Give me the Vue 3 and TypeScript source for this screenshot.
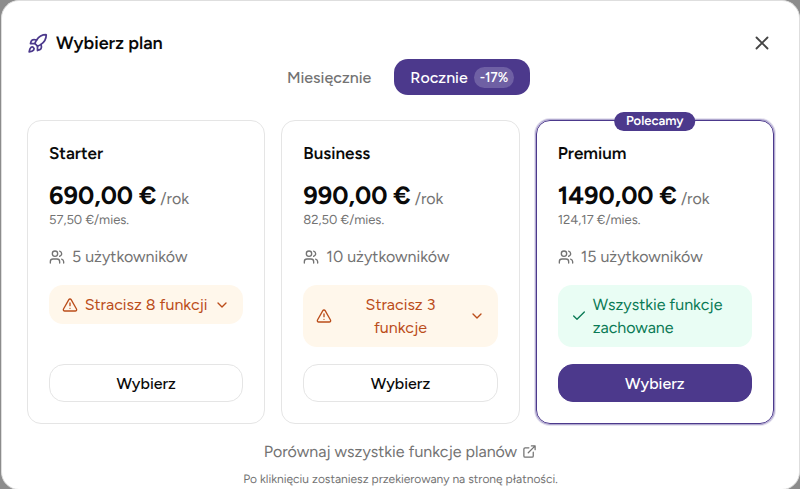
<script setup lang="ts">
import { ref } from 'vue'

interface Plan {
  id: string
  name: string
  price: string
  monthly: string
  users: string
  note: string
  keepsAll: boolean
  recommended: boolean
}

const period = ref<'month' | 'year'>('year')

const plans: Plan[] = [
  { id: 'starter', name: 'Starter', price: '690,00 €', monthly: '57,50 €/mies.', users: '5 użytkowników', note: 'Stracisz 8 funkcji', keepsAll: false, recommended: false },
  { id: 'business', name: 'Business', price: '990,00 €', monthly: '82,50 €/mies.', users: '10 użytkowników', note: 'Stracisz 3 funkcje', keepsAll: false, recommended: false },
  { id: 'premium', name: 'Premium', price: '1490,00 €', monthly: '124,17 €/mies.', users: '15 użytkowników', note: 'Wszystkie funkcje zachowane', keepsAll: true, recommended: true },
]
</script>

<template>
  <div class="backdrop">
    <main class="dialog" role="dialog" aria-labelledby="dialog-title">
      <header class="head">
        <svg class="icon rocket" viewBox="0 0 24 24" aria-hidden="true">
          <path d="M4.5 16.5c-1.5 1.26-2 5-2 5s3.74-.5 5-2c.71-.84.7-2.13-.09-2.91a2.18 2.18 0 0 0-2.91-.09z" />
          <path d="m12 15-3-3a22 22 0 0 1 2-3.95A12.88 12.88 0 0 1 22 2c0 2.72-.78 7.5-6 11a22.35 22.35 0 0 1-4 2z" />
          <path d="M9 12H4s.55-3.03 2-4c1.62-1.08 5 0 5 0" />
          <path d="M12 15v5s3.03-.55 4-2c1.08-1.62 0-5 0-5" />
        </svg>
        <h1 id="dialog-title">Wybierz plan</h1>
        <button class="close" type="button" aria-label="Zamknij">
          <svg class="icon" viewBox="0 0 24 24" aria-hidden="true"><path d="M18 6 6 18M6 6l12 12" /></svg>
        </button>
      </header>

      <div class="periods">
        <button type="button" class="period" :class="{ active: period === 'month' }" :aria-pressed="period === 'month'" @click="period = 'month'">Miesięcznie</button>
        <button type="button" class="period" :class="{ active: period === 'year' }" :aria-pressed="period === 'year'" @click="period = 'year'">
          Rocznie <span class="discount">-17%</span>
        </button>
      </div>

      <section class="plans">
        <article v-for="plan in plans" :key="plan.id" class="card" :class="{ recommended: plan.recommended }">
          <span v-if="plan.recommended" class="badge">Polecamy</span>
          <h2>{{ plan.name }}</h2>
          <p class="price"><strong>{{ plan.price }}</strong><span>/rok</span></p>
          <p class="monthly">{{ plan.monthly }}</p>
          <p class="users">
            <svg class="icon" viewBox="0 0 24 24" aria-hidden="true">
              <path d="M16 21v-2a4 4 0 0 0-4-4H6a4 4 0 0 0-4 4v2" />
              <circle cx="9" cy="7" r="4" />
              <path d="M22 21v-2a4 4 0 0 0-3-3.87M16 3.13a4 4 0 0 1 0 7.75" />
            </svg>
            {{ plan.users }}
          </p>
          <div v-if="plan.keepsAll" class="note kept">
            <svg class="icon" viewBox="0 0 24 24" aria-hidden="true"><path d="M20 6 9 17l-5-5" /></svg>
            <span>{{ plan.note }}</span>
          </div>
          <button v-else type="button" class="note lost">
            <svg class="icon" viewBox="0 0 24 24" aria-hidden="true">
              <path d="m21.73 18-8-14a2 2 0 0 0-3.48 0l-8 14A2 2 0 0 0 4 21h16a2 2 0 0 0 1.73-3M12 9v4M12 17h.01" />
            </svg>
            <span>{{ plan.note }}</span>
            <svg class="icon" viewBox="0 0 24 24" aria-hidden="true"><path d="m6 9 6 6 6-6" /></svg>
          </button>
          <button type="button" class="choose">Wybierz</button>
        </article>
      </section>

      <footer class="foot">
        <a href="#">
          Porównaj wszystkie funkcje planów
          <svg class="icon" viewBox="0 0 24 24" aria-hidden="true">
            <path d="M15 3h6v6M10 14 21 3M18 13v6a2 2 0 0 1-2 2H5a2 2 0 0 1-2-2V8a2 2 0 0 1 2-2h6" />
          </svg>
        </a>
        <p>Po kliknięciu zostaniesz przekierowany na stronę płatności.</p>
      </footer>
    </main>
  </div>
</template>

<style>
body {
  margin: 0;
  background: #8c8c8c;
}
</style>

<style scoped>
.backdrop {
  box-sizing: border-box;
  min-height: 100vh;
  padding: 0 0 0 1px;
  display: grid;
  font-family: Figtree, Lato, "Noto Sans", sans-serif;
  font-size: 16px;
  line-height: 23px;
  text-rendering: geometricPrecision;
  color: #0a0a0a;
}
.dialog {
  box-sizing: border-box;
  padding: 26px 25px 0;
  border: 1px solid #dedede;
  border-radius: 18px;
  background: #fff;
}
h1, h2, p { margin: 0; }
button {
  font: inherit;
  color: inherit;
  border: 0;
  padding: 0;
  background: none;
  cursor: pointer;
}
.icon {
  width: 16px;
  height: 16px;
  flex: none;
  fill: none;
  stroke: currentColor;
  stroke-width: 2;
  stroke-linecap: round;
  stroke-linejoin: round;
}
.head {
  display: flex;
  align-items: center;
  gap: 8px;
  height: 32px;
}
.head .rocket { width: 21px; height: 21px; color: #4c398c; }
h1 { font-size: 18px; font-weight: 600; }
.close {
  display: grid;
  place-items: center;
  margin-left: auto;
  width: 24px;
  height: 24px;
  color: #444;
}
.close .icon { width: 22px; height: 22px; }
.periods {
  display: flex;
  justify-content: center;
  gap: 7px;
}
.period {
  display: flex;
  align-items: center;
  gap: 6px;
  height: 36px;
  padding: 0 16px;
  border-radius: 14px;
  font-weight: 500;
  color: #737373;
}
.period.active { background: #4c398c; color: #fff; }
.discount {
  padding: 0 6px;
  border-radius: 11px;
  background: #6f60a4;
  font-size: 13px;
  font-weight: 600;
  line-height: 21px;
}
.plans {
  display: grid;
  grid-template-columns: repeat(3, 1fr);
  gap: 16px;
  margin-top: 25px;
}
.card {
  position: relative;
  display: flex;
  flex-direction: column;
  padding: 21px;
  border: 1px solid #e5e5e5;
  border-radius: 14px;
}
.card.recommended {
  border-color: #4c398c;
  box-shadow: 0 0 0 1px #b0a8cf, 0 0 0 2px #e6e3f0;
}
.badge {
  position: absolute;
  top: -9px;
  left: 50%;
  transform: translateX(-50%);
  padding: 0 12px;
  border-radius: 10px;
  background: #4c398c;
  color: #fff;
  font-size: 13px;
  font-weight: 600;
  line-height: 19px;
}
h2 { font-size: 17px; font-weight: 600; line-height: 25px; }
.price {
  display: flex;
  align-items: baseline;
  gap: 4px;
  margin-top: 16px;
  line-height: 27px;
  color: #737373;
}
.price strong { font-size: 25px; font-weight: 700; color: #0a0a0a; }
.monthly {
  font-size: 13px;
  line-height: 18px;
  color: #737373;
}
.users {
  display: flex;
  align-items: center;
  gap: 7px;
  margin: 15px 0 17px;
  color: #737373;
}
.note {
  display: flex;
  align-items: center;
  gap: 6px;
  margin-bottom: 17px;
  padding: 8px 13px;
  border-radius: 14px;
}
.note.lost { background: #fff7eb; color: #bb4d1a; }
.note.lost span { flex: 1; text-align: center; }
.note.kept { background: #e9fdf4; color: #0a7a55; }
.choose {
  height: 38px;
  margin-top: auto;
  border: 1px solid #e5e5e5;
  border-radius: 15px;
  font-weight: 500;
}
.recommended .choose {
  border-color: #4c398c;
  background: #4c398c;
  color: #fff;
}
.foot {
  display: flex;
  flex-direction: column;
  align-items: center;
  gap: 6px;
  margin-top: 16px;
  color: #737373;
}
.foot a {
  display: flex;
  align-items: center;
  gap: 5px;
  color: inherit;
  text-decoration: none;
}
.foot p { font-size: 12px; line-height: 20px; }
.foot .icon { width: 15px; height: 15px; }
</style>
